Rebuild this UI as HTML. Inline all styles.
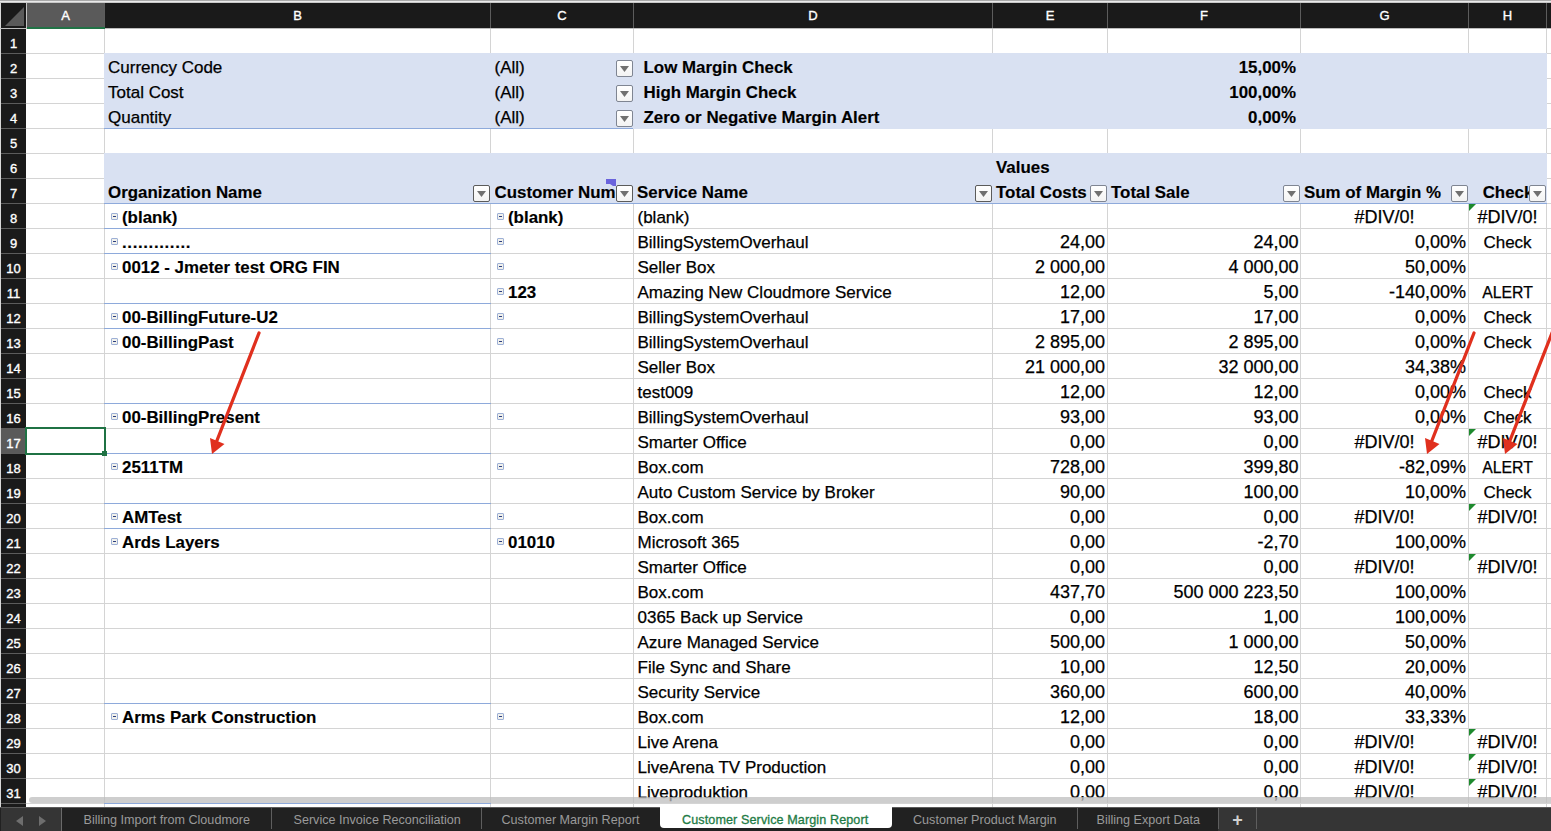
<!DOCTYPE html><html><head><meta charset="utf-8"><style>
html,body{margin:0;padding:0;}
body{width:1551px;height:831px;position:relative;overflow:hidden;background:#fff;font-family:"Liberation Sans",sans-serif;}
body div{position:absolute;}
.t,.n,.al{-webkit-text-stroke:0.25px #000;}
.b{-webkit-text-stroke:0.15px #000;}
.t{font-size:17px;line-height:20px;height:20px;white-space:nowrap;}
.b{font-size:16.9px;line-height:20px;height:20px;white-space:nowrap;font-weight:bold;}
.n{font-size:18px;line-height:20px;height:20px;white-space:nowrap;margin-top:-1px;}
.al{font-size:15.8px;line-height:20px;height:20px;white-space:nowrap;}
.hd{font-size:13px;line-height:20px;height:20px;color:#fff;-webkit-text-stroke:0.35px #fff;text-align:center;white-space:nowrap;}
.fb{width:15px;height:15px;border:1px solid #7f8592;border-radius:2px;background:linear-gradient(#fff,#f3f3f3);}
.fb2{width:15px;height:15px;border:1px solid #5b5b5b;border-radius:2px;background:linear-gradient(#fff,#f3f3f3);}
.ci{width:5px;height:5px;border:1px solid #9db0d6;border-radius:1px;background:#f1f1ec;}
.tab{font-size:12.6px;line-height:16px;color:#9a9a9a;white-space:nowrap;top:812px;}
</style></head><body>

<div style="left:0px;top:0px;width:1551px;height:1px;background:#a9a9a9;"></div>
<div style="left:0px;top:1px;width:1551px;height:1px;background:#e9e9e9;"></div>
<div style="left:0px;top:2px;width:1551px;height:1px;background:#c8c8c8;"></div>
<div style="left:0px;top:3px;width:1551px;height:25px;background:#1a1a1a;"></div>
<div style="left:0px;top:3px;width:1px;height:828px;background:#d8d8d8;"></div>
<svg style="position:absolute;left:0;top:0" width="30" height="30"><polygon points="24,7 24,26 5,26" fill="#5a5a5a"/></svg>
<div style="left:104px;top:3px;width:1px;height:25px;background:#5c5c5c;"></div>
<div style="left:490px;top:3px;width:1px;height:25px;background:#5c5c5c;"></div>
<div style="left:633px;top:3px;width:1px;height:25px;background:#5c5c5c;"></div>
<div style="left:992px;top:3px;width:1px;height:25px;background:#5c5c5c;"></div>
<div style="left:1107px;top:3px;width:1px;height:25px;background:#5c5c5c;"></div>
<div style="left:1300px;top:3px;width:1px;height:25px;background:#5c5c5c;"></div>
<div style="left:1468px;top:3px;width:1px;height:25px;background:#5c5c5c;"></div>
<div style="left:1546px;top:3px;width:1px;height:25px;background:#5c5c5c;"></div>
<div style="left:26px;top:3px;width:1px;height:26px;background:#c4c4c4;"></div>
<div style="left:0px;top:28px;width:1551px;height:1px;background:#bdbdbd;"></div>
<div style="left:27px;top:3px;width:77px;height:24px;background:#5a5a5a;"></div>
<div style="left:27px;top:27px;width:78px;height:2px;background:#217346;"></div>
<div class="hd" style="left:15.5px;width:100px;top:6px">A</div>
<div class="hd" style="left:247.5px;width:100px;top:6px">B</div>
<div class="hd" style="left:512.0px;width:100px;top:6px">C</div>
<div class="hd" style="left:763.0px;width:100px;top:6px">D</div>
<div class="hd" style="left:1000.0px;width:100px;top:6px">E</div>
<div class="hd" style="left:1154.0px;width:100px;top:6px">F</div>
<div class="hd" style="left:1334.5px;width:100px;top:6px">G</div>
<div class="hd" style="left:1457.5px;width:100px;top:6px">H</div>
<div class="hd" style="left:1527px;width:40px;top:6px"></div>
<div style="left:1px;top:29px;width:25px;height:778px;background:#1a1a1a;"></div>
<div style="left:1px;top:53px;width:25px;height:1px;background:#5c5c5c;"></div>
<div style="left:1px;top:78px;width:25px;height:1px;background:#5c5c5c;"></div>
<div style="left:1px;top:103px;width:25px;height:1px;background:#5c5c5c;"></div>
<div style="left:1px;top:128px;width:25px;height:1px;background:#5c5c5c;"></div>
<div style="left:1px;top:153px;width:25px;height:1px;background:#5c5c5c;"></div>
<div style="left:1px;top:178px;width:25px;height:1px;background:#5c5c5c;"></div>
<div style="left:1px;top:203px;width:25px;height:1px;background:#5c5c5c;"></div>
<div style="left:1px;top:228px;width:25px;height:1px;background:#5c5c5c;"></div>
<div style="left:1px;top:253px;width:25px;height:1px;background:#5c5c5c;"></div>
<div style="left:1px;top:278px;width:25px;height:1px;background:#5c5c5c;"></div>
<div style="left:1px;top:303px;width:25px;height:1px;background:#5c5c5c;"></div>
<div style="left:1px;top:328px;width:25px;height:1px;background:#5c5c5c;"></div>
<div style="left:1px;top:353px;width:25px;height:1px;background:#5c5c5c;"></div>
<div style="left:1px;top:378px;width:25px;height:1px;background:#5c5c5c;"></div>
<div style="left:1px;top:403px;width:25px;height:1px;background:#5c5c5c;"></div>
<div style="left:1px;top:428px;width:25px;height:1px;background:#5c5c5c;"></div>
<div style="left:1px;top:453px;width:25px;height:1px;background:#5c5c5c;"></div>
<div style="left:1px;top:478px;width:25px;height:1px;background:#5c5c5c;"></div>
<div style="left:1px;top:503px;width:25px;height:1px;background:#5c5c5c;"></div>
<div style="left:1px;top:528px;width:25px;height:1px;background:#5c5c5c;"></div>
<div style="left:1px;top:553px;width:25px;height:1px;background:#5c5c5c;"></div>
<div style="left:1px;top:578px;width:25px;height:1px;background:#5c5c5c;"></div>
<div style="left:1px;top:603px;width:25px;height:1px;background:#5c5c5c;"></div>
<div style="left:1px;top:628px;width:25px;height:1px;background:#5c5c5c;"></div>
<div style="left:1px;top:653px;width:25px;height:1px;background:#5c5c5c;"></div>
<div style="left:1px;top:678px;width:25px;height:1px;background:#5c5c5c;"></div>
<div style="left:1px;top:703px;width:25px;height:1px;background:#5c5c5c;"></div>
<div style="left:1px;top:728px;width:25px;height:1px;background:#5c5c5c;"></div>
<div style="left:1px;top:753px;width:25px;height:1px;background:#5c5c5c;"></div>
<div style="left:1px;top:778px;width:25px;height:1px;background:#5c5c5c;"></div>
<div style="left:1px;top:803px;width:25px;height:1px;background:#5c5c5c;"></div>
<div style="left:1px;top:429px;width:25px;height:24px;background:#5a5a5a;"></div>
<div class="hd" style="left:1px;width:25px;top:34px">1</div>
<div class="hd" style="left:1px;width:25px;top:59px">2</div>
<div class="hd" style="left:1px;width:25px;top:84px">3</div>
<div class="hd" style="left:1px;width:25px;top:109px">4</div>
<div class="hd" style="left:1px;width:25px;top:134px">5</div>
<div class="hd" style="left:1px;width:25px;top:159px">6</div>
<div class="hd" style="left:1px;width:25px;top:184px">7</div>
<div class="hd" style="left:1px;width:25px;top:209px">8</div>
<div class="hd" style="left:1px;width:25px;top:234px">9</div>
<div class="hd" style="left:1px;width:25px;top:259px">10</div>
<div class="hd" style="left:1px;width:25px;top:284px">11</div>
<div class="hd" style="left:1px;width:25px;top:309px">12</div>
<div class="hd" style="left:1px;width:25px;top:334px">13</div>
<div class="hd" style="left:1px;width:25px;top:359px">14</div>
<div class="hd" style="left:1px;width:25px;top:384px">15</div>
<div class="hd" style="left:1px;width:25px;top:409px">16</div>
<div class="hd" style="left:1px;width:25px;top:434px">17</div>
<div class="hd" style="left:1px;width:25px;top:459px">18</div>
<div class="hd" style="left:1px;width:25px;top:484px">19</div>
<div class="hd" style="left:1px;width:25px;top:509px">20</div>
<div class="hd" style="left:1px;width:25px;top:534px">21</div>
<div class="hd" style="left:1px;width:25px;top:559px">22</div>
<div class="hd" style="left:1px;width:25px;top:584px">23</div>
<div class="hd" style="left:1px;width:25px;top:609px">24</div>
<div class="hd" style="left:1px;width:25px;top:634px">25</div>
<div class="hd" style="left:1px;width:25px;top:659px">26</div>
<div class="hd" style="left:1px;width:25px;top:684px">27</div>
<div class="hd" style="left:1px;width:25px;top:709px">28</div>
<div class="hd" style="left:1px;width:25px;top:734px">29</div>
<div class="hd" style="left:1px;width:25px;top:759px">30</div>
<div class="hd" style="left:1px;width:25px;top:784px">31</div>
<div style="left:26px;top:53px;width:1525px;height:1px;background:#d4d4d4;"></div>
<div style="left:26px;top:78px;width:1525px;height:1px;background:#d4d4d4;"></div>
<div style="left:26px;top:103px;width:1525px;height:1px;background:#d4d4d4;"></div>
<div style="left:26px;top:128px;width:1525px;height:1px;background:#d4d4d4;"></div>
<div style="left:26px;top:153px;width:1525px;height:1px;background:#d4d4d4;"></div>
<div style="left:26px;top:178px;width:1525px;height:1px;background:#d4d4d4;"></div>
<div style="left:26px;top:203px;width:1525px;height:1px;background:#d4d4d4;"></div>
<div style="left:26px;top:228px;width:1525px;height:1px;background:#d4d4d4;"></div>
<div style="left:26px;top:253px;width:1525px;height:1px;background:#d4d4d4;"></div>
<div style="left:26px;top:278px;width:1525px;height:1px;background:#d4d4d4;"></div>
<div style="left:26px;top:303px;width:1525px;height:1px;background:#d4d4d4;"></div>
<div style="left:26px;top:328px;width:1525px;height:1px;background:#d4d4d4;"></div>
<div style="left:26px;top:353px;width:1525px;height:1px;background:#d4d4d4;"></div>
<div style="left:26px;top:378px;width:1525px;height:1px;background:#d4d4d4;"></div>
<div style="left:26px;top:403px;width:1525px;height:1px;background:#d4d4d4;"></div>
<div style="left:26px;top:428px;width:1525px;height:1px;background:#d4d4d4;"></div>
<div style="left:26px;top:453px;width:1525px;height:1px;background:#d4d4d4;"></div>
<div style="left:26px;top:478px;width:1525px;height:1px;background:#d4d4d4;"></div>
<div style="left:26px;top:503px;width:1525px;height:1px;background:#d4d4d4;"></div>
<div style="left:26px;top:528px;width:1525px;height:1px;background:#d4d4d4;"></div>
<div style="left:26px;top:553px;width:1525px;height:1px;background:#d4d4d4;"></div>
<div style="left:26px;top:578px;width:1525px;height:1px;background:#d4d4d4;"></div>
<div style="left:26px;top:603px;width:1525px;height:1px;background:#d4d4d4;"></div>
<div style="left:26px;top:628px;width:1525px;height:1px;background:#d4d4d4;"></div>
<div style="left:26px;top:653px;width:1525px;height:1px;background:#d4d4d4;"></div>
<div style="left:26px;top:678px;width:1525px;height:1px;background:#d4d4d4;"></div>
<div style="left:26px;top:703px;width:1525px;height:1px;background:#d4d4d4;"></div>
<div style="left:26px;top:728px;width:1525px;height:1px;background:#d4d4d4;"></div>
<div style="left:26px;top:753px;width:1525px;height:1px;background:#d4d4d4;"></div>
<div style="left:26px;top:778px;width:1525px;height:1px;background:#d4d4d4;"></div>
<div style="left:26px;top:803px;width:1525px;height:1px;background:#d4d4d4;"></div>
<div style="left:104px;top:29px;width:1px;height:778px;background:#d4d4d4;"></div>
<div style="left:490px;top:29px;width:1px;height:778px;background:#d4d4d4;"></div>
<div style="left:633px;top:29px;width:1px;height:778px;background:#d4d4d4;"></div>
<div style="left:992px;top:29px;width:1px;height:778px;background:#d4d4d4;"></div>
<div style="left:1107px;top:29px;width:1px;height:778px;background:#d4d4d4;"></div>
<div style="left:1300px;top:29px;width:1px;height:778px;background:#d4d4d4;"></div>
<div style="left:1468px;top:29px;width:1px;height:778px;background:#d4d4d4;"></div>
<div style="left:1546px;top:29px;width:1px;height:778px;background:#d4d4d4;"></div>
<div style="left:104px;top:53px;width:1443px;height:76px;background:#d9e1f2;"></div>
<div style="left:104px;top:128px;width:529px;height:1px;background:#8eaadb;"></div>
<div style="left:104px;top:153px;width:1443px;height:50px;background:#d9e1f2;"></div>
<div style="left:104px;top:203px;width:1443px;height:1px;background:#8eaadb;"></div>
<div style="left:104px;top:228px;width:387px;height:1px;background:#8eaadb;"></div>
<div style="left:104px;top:253px;width:387px;height:1px;background:#8eaadb;"></div>
<div style="left:104px;top:303px;width:387px;height:1px;background:#8eaadb;"></div>
<div style="left:104px;top:328px;width:387px;height:1px;background:#8eaadb;"></div>
<div style="left:104px;top:403px;width:387px;height:1px;background:#8eaadb;"></div>
<div style="left:104px;top:453px;width:387px;height:1px;background:#8eaadb;"></div>
<div style="left:104px;top:503px;width:387px;height:1px;background:#8eaadb;"></div>
<div style="left:104px;top:528px;width:387px;height:1px;background:#8eaadb;"></div>
<div style="left:104px;top:703px;width:387px;height:1px;background:#8eaadb;"></div>
<div style="left:104px;top:803px;width:387px;height:1px;background:#8eaadb;"></div>
<div class="t" style="left:108px;top:58px;color:#000">Currency Code</div>
<div class="t" style="left:108px;top:83px;color:#000">Total Cost</div>
<div class="t" style="left:108px;top:108px;color:#000">Quantity</div>
<div class="t" style="left:494.5px;top:58px;color:#000">(All)</div>
<div class="fb" style="left:616px;top:60px"></div>
<svg style="position:absolute;left:620px;top:66px" width="10" height="7"><polygon points="0,0 9,0 4.5,6" fill="#707070"/></svg>
<div class="t" style="left:494.5px;top:83px;color:#000">(All)</div>
<div class="fb" style="left:616px;top:85px"></div>
<svg style="position:absolute;left:620px;top:91px" width="10" height="7"><polygon points="0,0 9,0 4.5,6" fill="#707070"/></svg>
<div class="t" style="left:494.5px;top:108px;color:#000">(All)</div>
<div class="fb" style="left:616px;top:110px"></div>
<svg style="position:absolute;left:620px;top:116px" width="10" height="7"><polygon points="0,0 9,0 4.5,6" fill="#707070"/></svg>
<div class="b" style="left:643.5px;top:58px;color:#000">Low Margin Check</div>
<div class="b" style="left:643.5px;top:83px;color:#000">High Margin Check</div>
<div class="b" style="left:643.5px;top:108px;color:#000">Zero or Negative Margin Alert</div>
<div class="b" style="left:896px;width:400px;text-align:right;top:58px;color:#000">15,00%</div>
<div class="b" style="left:896px;width:400px;text-align:right;top:83px;color:#000">100,00%</div>
<div class="b" style="left:896px;width:400px;text-align:right;top:108px;color:#000">0,00%</div>
<div class="b" style="left:996px;top:158px;color:#000">Values</div>
<div class="b" style="left:108px;top:183px;color:#000">Organization Name</div>
<div class="b" style="left:494.5px;width:121.5px;overflow:hidden;top:183px;color:#000">Customer Number</div>
<div class="b" style="left:637px;top:183px;color:#000">Service Name</div>
<div class="b" style="left:996px;top:183px;color:#000">Total Costs</div>
<div class="b" style="left:1111px;top:183px;color:#000">Total Sale</div>
<div class="b" style="left:1304px;top:183px;color:#000">Sum of Margin %</div>
<div class="b" style="left:1308px;width:400px;text-align:center;top:183px;color:#000">Check</div>
<div class="fb2" style="left:473px;top:185px"></div>
<svg style="position:absolute;left:477px;top:191px" width="10" height="7"><polygon points="0,0 9,0 4.5,6" fill="#707070"/></svg>
<div class="fb2" style="left:616px;top:185px"></div>
<svg style="position:absolute;left:620px;top:191px" width="10" height="7"><polygon points="0,0 9,0 4.5,6" fill="#707070"/></svg>
<div class="fb2" style="left:975px;top:185px"></div>
<svg style="position:absolute;left:979px;top:191px" width="10" height="7"><polygon points="0,0 9,0 4.5,6" fill="#707070"/></svg>
<div class="fb" style="left:1090px;top:185px"></div>
<svg style="position:absolute;left:1094px;top:191px" width="10" height="7"><polygon points="0,0 9,0 4.5,6" fill="#707070"/></svg>
<div class="fb" style="left:1283px;top:185px"></div>
<svg style="position:absolute;left:1287px;top:191px" width="10" height="7"><polygon points="0,0 9,0 4.5,6" fill="#707070"/></svg>
<div class="fb" style="left:1451px;top:185px"></div>
<svg style="position:absolute;left:1455px;top:191px" width="10" height="7"><polygon points="0,0 9,0 4.5,6" fill="#707070"/></svg>
<div class="fb" style="left:1529px;top:185px"></div>
<svg style="position:absolute;left:1533px;top:191px" width="10" height="7"><polygon points="0,0 9,0 4.5,6" fill="#707070"/></svg>
<svg style="position:absolute;left:600px;top:175px" width="20" height="15"><polygon points="6,4 16,4 16,11 13,11 10,9 6,9" fill="#6a63dc"/></svg>
<div class="ci" style="left:111px;top:213px"><div style="left:1px;top:2px;width:3px;height:1px;background:#2c3e7e"></div></div>
<div class="b" style="left:122px;top:208px;color:#000">(blank)</div>
<div class="ci" style="left:497px;top:213px"><div style="left:1px;top:2px;width:3px;height:1px;background:#2c3e7e"></div></div>
<div class="b" style="left:508px;top:208px;color:#000">(blank)</div>
<div class="t" style="left:637.5px;top:208px;color:#000">(blank)</div>
<div class="n" style="left:1184.5px;width:400px;text-align:center;top:208px;color:#000">#DIV/0!</div>
<div class="n" style="left:1307.5px;width:400px;text-align:center;top:208px;color:#000">#DIV/0!</div>
<svg style="position:absolute;left:1469px;top:204px" width="8" height="8"><polygon points="0,0 7,0 0,7" fill="#1e8a2e"/></svg>
<div class="ci" style="left:111px;top:238px"><div style="left:1px;top:2px;width:3px;height:1px;background:#2c3e7e"></div></div>
<div class="b" style="left:122px;top:233px;color:#000"><span style="letter-spacing:0.62px">.............</span></div>
<div class="ci" style="left:497px;top:238px"><div style="left:1px;top:2px;width:3px;height:1px;background:#2c3e7e"></div></div>
<div class="t" style="left:637.5px;top:233px;color:#000">BillingSystemOverhaul</div>
<div class="n" style="left:705px;width:400px;text-align:right;top:233px;color:#000">24,00</div>
<div class="n" style="left:898.5px;width:400px;text-align:right;top:233px;color:#000">24,00</div>
<div class="n" style="left:1066px;width:400px;text-align:right;top:233px;color:#000">0,00%</div>
<div class="t" style="left:1307.5px;width:400px;text-align:center;top:233px;color:#000">Check</div>
<div class="ci" style="left:111px;top:263px"><div style="left:1px;top:2px;width:3px;height:1px;background:#2c3e7e"></div></div>
<div class="b" style="left:122px;top:258px;color:#000">0012 - Jmeter test ORG FIN</div>
<div class="ci" style="left:497px;top:263px"><div style="left:1px;top:2px;width:3px;height:1px;background:#2c3e7e"></div></div>
<div class="t" style="left:637.5px;top:258px;color:#000">Seller Box</div>
<div class="n" style="left:705px;width:400px;text-align:right;top:258px;color:#000">2 000,00</div>
<div class="n" style="left:898.5px;width:400px;text-align:right;top:258px;color:#000">4 000,00</div>
<div class="n" style="left:1066px;width:400px;text-align:right;top:258px;color:#000">50,00%</div>
<div class="ci" style="left:497px;top:288px"><div style="left:1px;top:2px;width:3px;height:1px;background:#2c3e7e"></div></div>
<div class="b" style="left:508px;top:283px;color:#000">123</div>
<div class="t" style="left:637.5px;top:283px;color:#000">Amazing New Cloudmore Service</div>
<div class="n" style="left:705px;width:400px;text-align:right;top:283px;color:#000">12,00</div>
<div class="n" style="left:898.5px;width:400px;text-align:right;top:283px;color:#000">5,00</div>
<div class="n" style="left:1066px;width:400px;text-align:right;top:283px;color:#000">-140,00%</div>
<div class="al" style="left:1307.5px;width:400px;text-align:center;top:283px;color:#000">ALERT</div>
<div class="ci" style="left:111px;top:313px"><div style="left:1px;top:2px;width:3px;height:1px;background:#2c3e7e"></div></div>
<div class="b" style="left:122px;top:308px;color:#000">00-BillingFuture-U2</div>
<div class="ci" style="left:497px;top:313px"><div style="left:1px;top:2px;width:3px;height:1px;background:#2c3e7e"></div></div>
<div class="t" style="left:637.5px;top:308px;color:#000">BillingSystemOverhaul</div>
<div class="n" style="left:705px;width:400px;text-align:right;top:308px;color:#000">17,00</div>
<div class="n" style="left:898.5px;width:400px;text-align:right;top:308px;color:#000">17,00</div>
<div class="n" style="left:1066px;width:400px;text-align:right;top:308px;color:#000">0,00%</div>
<div class="t" style="left:1307.5px;width:400px;text-align:center;top:308px;color:#000">Check</div>
<div class="ci" style="left:111px;top:338px"><div style="left:1px;top:2px;width:3px;height:1px;background:#2c3e7e"></div></div>
<div class="b" style="left:122px;top:333px;color:#000">00-BillingPast</div>
<div class="ci" style="left:497px;top:338px"><div style="left:1px;top:2px;width:3px;height:1px;background:#2c3e7e"></div></div>
<div class="t" style="left:637.5px;top:333px;color:#000">BillingSystemOverhaul</div>
<div class="n" style="left:705px;width:400px;text-align:right;top:333px;color:#000">2 895,00</div>
<div class="n" style="left:898.5px;width:400px;text-align:right;top:333px;color:#000">2 895,00</div>
<div class="n" style="left:1066px;width:400px;text-align:right;top:333px;color:#000">0,00%</div>
<div class="t" style="left:1307.5px;width:400px;text-align:center;top:333px;color:#000">Check</div>
<div class="t" style="left:637.5px;top:358px;color:#000">Seller Box</div>
<div class="n" style="left:705px;width:400px;text-align:right;top:358px;color:#000">21 000,00</div>
<div class="n" style="left:898.5px;width:400px;text-align:right;top:358px;color:#000">32 000,00</div>
<div class="n" style="left:1066px;width:400px;text-align:right;top:358px;color:#000">34,38%</div>
<div class="t" style="left:637.5px;top:383px;color:#000">test009</div>
<div class="n" style="left:705px;width:400px;text-align:right;top:383px;color:#000">12,00</div>
<div class="n" style="left:898.5px;width:400px;text-align:right;top:383px;color:#000">12,00</div>
<div class="n" style="left:1066px;width:400px;text-align:right;top:383px;color:#000">0,00%</div>
<div class="t" style="left:1307.5px;width:400px;text-align:center;top:383px;color:#000">Check</div>
<div class="ci" style="left:111px;top:413px"><div style="left:1px;top:2px;width:3px;height:1px;background:#2c3e7e"></div></div>
<div class="b" style="left:122px;top:408px;color:#000">00-BillingPresent</div>
<div class="ci" style="left:497px;top:413px"><div style="left:1px;top:2px;width:3px;height:1px;background:#2c3e7e"></div></div>
<div class="t" style="left:637.5px;top:408px;color:#000">BillingSystemOverhaul</div>
<div class="n" style="left:705px;width:400px;text-align:right;top:408px;color:#000">93,00</div>
<div class="n" style="left:898.5px;width:400px;text-align:right;top:408px;color:#000">93,00</div>
<div class="n" style="left:1066px;width:400px;text-align:right;top:408px;color:#000">0,00%</div>
<div class="t" style="left:1307.5px;width:400px;text-align:center;top:408px;color:#000">Check</div>
<div class="t" style="left:637.5px;top:433px;color:#000">Smarter Office</div>
<div class="n" style="left:705px;width:400px;text-align:right;top:433px;color:#000">0,00</div>
<div class="n" style="left:898.5px;width:400px;text-align:right;top:433px;color:#000">0,00</div>
<div class="n" style="left:1184.5px;width:400px;text-align:center;top:433px;color:#000">#DIV/0!</div>
<div class="n" style="left:1307.5px;width:400px;text-align:center;top:433px;color:#000">#DIV/0!</div>
<svg style="position:absolute;left:1469px;top:429px" width="8" height="8"><polygon points="0,0 7,0 0,7" fill="#1e8a2e"/></svg>
<div class="ci" style="left:111px;top:463px"><div style="left:1px;top:2px;width:3px;height:1px;background:#2c3e7e"></div></div>
<div class="b" style="left:122px;top:458px;color:#000">2511TM</div>
<div class="ci" style="left:497px;top:463px"><div style="left:1px;top:2px;width:3px;height:1px;background:#2c3e7e"></div></div>
<div class="t" style="left:637.5px;top:458px;color:#000">Box.com</div>
<div class="n" style="left:705px;width:400px;text-align:right;top:458px;color:#000">728,00</div>
<div class="n" style="left:898.5px;width:400px;text-align:right;top:458px;color:#000">399,80</div>
<div class="n" style="left:1066px;width:400px;text-align:right;top:458px;color:#000">-82,09%</div>
<div class="al" style="left:1307.5px;width:400px;text-align:center;top:458px;color:#000">ALERT</div>
<div class="t" style="left:637.5px;top:483px;color:#000">Auto Custom Service by Broker</div>
<div class="n" style="left:705px;width:400px;text-align:right;top:483px;color:#000">90,00</div>
<div class="n" style="left:898.5px;width:400px;text-align:right;top:483px;color:#000">100,00</div>
<div class="n" style="left:1066px;width:400px;text-align:right;top:483px;color:#000">10,00%</div>
<div class="t" style="left:1307.5px;width:400px;text-align:center;top:483px;color:#000">Check</div>
<div class="ci" style="left:111px;top:513px"><div style="left:1px;top:2px;width:3px;height:1px;background:#2c3e7e"></div></div>
<div class="b" style="left:122px;top:508px;color:#000">AMTest</div>
<div class="ci" style="left:497px;top:513px"><div style="left:1px;top:2px;width:3px;height:1px;background:#2c3e7e"></div></div>
<div class="t" style="left:637.5px;top:508px;color:#000">Box.com</div>
<div class="n" style="left:705px;width:400px;text-align:right;top:508px;color:#000">0,00</div>
<div class="n" style="left:898.5px;width:400px;text-align:right;top:508px;color:#000">0,00</div>
<div class="n" style="left:1184.5px;width:400px;text-align:center;top:508px;color:#000">#DIV/0!</div>
<div class="n" style="left:1307.5px;width:400px;text-align:center;top:508px;color:#000">#DIV/0!</div>
<svg style="position:absolute;left:1469px;top:504px" width="8" height="8"><polygon points="0,0 7,0 0,7" fill="#1e8a2e"/></svg>
<div class="ci" style="left:111px;top:538px"><div style="left:1px;top:2px;width:3px;height:1px;background:#2c3e7e"></div></div>
<div class="b" style="left:122px;top:533px;color:#000">Ards Layers</div>
<div class="ci" style="left:497px;top:538px"><div style="left:1px;top:2px;width:3px;height:1px;background:#2c3e7e"></div></div>
<div class="b" style="left:508px;top:533px;color:#000">01010</div>
<div class="t" style="left:637.5px;top:533px;color:#000">Microsoft 365</div>
<div class="n" style="left:705px;width:400px;text-align:right;top:533px;color:#000">0,00</div>
<div class="n" style="left:898.5px;width:400px;text-align:right;top:533px;color:#000">-2,70</div>
<div class="n" style="left:1066px;width:400px;text-align:right;top:533px;color:#000">100,00%</div>
<div class="t" style="left:637.5px;top:558px;color:#000">Smarter Office</div>
<div class="n" style="left:705px;width:400px;text-align:right;top:558px;color:#000">0,00</div>
<div class="n" style="left:898.5px;width:400px;text-align:right;top:558px;color:#000">0,00</div>
<div class="n" style="left:1184.5px;width:400px;text-align:center;top:558px;color:#000">#DIV/0!</div>
<div class="n" style="left:1307.5px;width:400px;text-align:center;top:558px;color:#000">#DIV/0!</div>
<svg style="position:absolute;left:1469px;top:554px" width="8" height="8"><polygon points="0,0 7,0 0,7" fill="#1e8a2e"/></svg>
<div class="t" style="left:637.5px;top:583px;color:#000">Box.com</div>
<div class="n" style="left:705px;width:400px;text-align:right;top:583px;color:#000">437,70</div>
<div class="n" style="left:898.5px;width:400px;text-align:right;top:583px;color:#000">500 000 223,50</div>
<div class="n" style="left:1066px;width:400px;text-align:right;top:583px;color:#000">100,00%</div>
<div class="t" style="left:637.5px;top:608px;color:#000">0365 Back up Service</div>
<div class="n" style="left:705px;width:400px;text-align:right;top:608px;color:#000">0,00</div>
<div class="n" style="left:898.5px;width:400px;text-align:right;top:608px;color:#000">1,00</div>
<div class="n" style="left:1066px;width:400px;text-align:right;top:608px;color:#000">100,00%</div>
<div class="t" style="left:637.5px;top:633px;color:#000">Azure Managed Service</div>
<div class="n" style="left:705px;width:400px;text-align:right;top:633px;color:#000">500,00</div>
<div class="n" style="left:898.5px;width:400px;text-align:right;top:633px;color:#000">1 000,00</div>
<div class="n" style="left:1066px;width:400px;text-align:right;top:633px;color:#000">50,00%</div>
<div class="t" style="left:637.5px;top:658px;color:#000">File Sync and Share</div>
<div class="n" style="left:705px;width:400px;text-align:right;top:658px;color:#000">10,00</div>
<div class="n" style="left:898.5px;width:400px;text-align:right;top:658px;color:#000">12,50</div>
<div class="n" style="left:1066px;width:400px;text-align:right;top:658px;color:#000">20,00%</div>
<div class="t" style="left:637.5px;top:683px;color:#000">Security Service</div>
<div class="n" style="left:705px;width:400px;text-align:right;top:683px;color:#000">360,00</div>
<div class="n" style="left:898.5px;width:400px;text-align:right;top:683px;color:#000">600,00</div>
<div class="n" style="left:1066px;width:400px;text-align:right;top:683px;color:#000">40,00%</div>
<div class="ci" style="left:111px;top:713px"><div style="left:1px;top:2px;width:3px;height:1px;background:#2c3e7e"></div></div>
<div class="b" style="left:122px;top:708px;color:#000">Arms Park Construction</div>
<div class="ci" style="left:497px;top:713px"><div style="left:1px;top:2px;width:3px;height:1px;background:#2c3e7e"></div></div>
<div class="t" style="left:637.5px;top:708px;color:#000">Box.com</div>
<div class="n" style="left:705px;width:400px;text-align:right;top:708px;color:#000">12,00</div>
<div class="n" style="left:898.5px;width:400px;text-align:right;top:708px;color:#000">18,00</div>
<div class="n" style="left:1066px;width:400px;text-align:right;top:708px;color:#000">33,33%</div>
<div class="t" style="left:637.5px;top:733px;color:#000">Live Arena</div>
<div class="n" style="left:705px;width:400px;text-align:right;top:733px;color:#000">0,00</div>
<div class="n" style="left:898.5px;width:400px;text-align:right;top:733px;color:#000">0,00</div>
<div class="n" style="left:1184.5px;width:400px;text-align:center;top:733px;color:#000">#DIV/0!</div>
<div class="n" style="left:1307.5px;width:400px;text-align:center;top:733px;color:#000">#DIV/0!</div>
<svg style="position:absolute;left:1469px;top:729px" width="8" height="8"><polygon points="0,0 7,0 0,7" fill="#1e8a2e"/></svg>
<div class="t" style="left:637.5px;top:758px;color:#000">LiveArena TV Production</div>
<div class="n" style="left:705px;width:400px;text-align:right;top:758px;color:#000">0,00</div>
<div class="n" style="left:898.5px;width:400px;text-align:right;top:758px;color:#000">0,00</div>
<div class="n" style="left:1184.5px;width:400px;text-align:center;top:758px;color:#000">#DIV/0!</div>
<div class="n" style="left:1307.5px;width:400px;text-align:center;top:758px;color:#000">#DIV/0!</div>
<svg style="position:absolute;left:1469px;top:754px" width="8" height="8"><polygon points="0,0 7,0 0,7" fill="#1e8a2e"/></svg>
<div class="t" style="left:637.5px;top:783px;color:#000">Liveproduktion</div>
<div class="n" style="left:705px;width:400px;text-align:right;top:783px;color:#000">0,00</div>
<div class="n" style="left:898.5px;width:400px;text-align:right;top:783px;color:#000">0,00</div>
<div class="n" style="left:1184.5px;width:400px;text-align:center;top:783px;color:#000">#DIV/0!</div>
<div class="n" style="left:1307.5px;width:400px;text-align:center;top:783px;color:#000">#DIV/0!</div>
<svg style="position:absolute;left:1469px;top:779px" width="8" height="8"><polygon points="0,0 7,0 0,7" fill="#1e8a2e"/></svg>
<div style="left:25px;top:427px;width:77px;height:24px;border:2px solid #1f7244;"></div>
<div style="left:102px;top:451px;width:5px;height:5px;background:#1f7244;"></div>
<div style="left:29px;top:797px;width:1530px;height:6px;background:rgba(190,190,190,0.75);border-radius:3px;"></div>
<svg style="position:absolute;left:0;top:0" width="1551" height="831">
<g stroke="#e0301e" stroke-width="3.3" fill="#e0301e" stroke-linecap="round">
<line x1="259" y1="333" x2="216" y2="443"/>
<polygon stroke="none" points="212,454 210,438 224.5,444"/>
<line x1="1474" y1="333" x2="1431" y2="443"/>
<polygon stroke="none" points="1427,454 1425,438 1439.5,444"/>
<line x1="1552" y1="333" x2="1509" y2="443"/>
<polygon stroke="none" points="1505,454 1503,438 1517.5,444"/>
</g></svg>
<div style="left:0px;top:807px;width:1551px;height:1px;background:#5a5a5a;"></div>
<div style="left:0px;top:808px;width:1551px;height:23px;background:#212121;"></div>
<div style="left:1px;top:808px;width:60px;height:23px;background:#353535;"></div>
<div style="left:61px;top:808px;width:1px;height:23px;background:#6a6a6a;"></div>
<svg style="position:absolute;left:0;top:808px" width="60" height="23"><polygon points="23,8 23,18 16,13" fill="#6e6e6e"/><polygon points="39,8 39,18 46,13" fill="#6e6e6e"/></svg>
<div style="left:1218px;top:808px;width:333px;height:23px;background:#353535;"></div>
<div style="left:271px;top:808px;width:1px;height:21px;background:#5e5e5e;"></div>
<div style="left:481px;top:808px;width:1px;height:21px;background:#5e5e5e;"></div>
<div style="left:1077px;top:808px;width:1px;height:21px;background:#5e5e5e;"></div>
<div style="left:1218px;top:808px;width:1px;height:21px;background:#5e5e5e;"></div>
<div style="left:1256px;top:808px;width:1px;height:21px;background:#5e5e5e;"></div>
<div style="left:660px;top:807px;width:232px;height:21px;background:#ffffff;border-radius:0 0 4px 4px;"></div>
<div class="tab" style="left:83.5px">Billing Import from Cloudmore</div>
<div class="tab" style="left:293.5px">Service Invoice Reconciliation</div>
<div class="tab" style="left:501.5px">Customer Margin Report</div>
<div class="tab" style="left:682px;color:#1e7b45;-webkit-text-stroke:0.3px #1e7b45;letter-spacing:0.1px">Customer Service Margin Report</div>
<div class="tab" style="left:913px">Customer Product Margin</div>
<div class="tab" style="left:1096.5px">Billing Export Data</div>
<div style="left:1231px;top:812px;width:13px;height:16px;font-size:18px;line-height:16px;color:#d0d0d0;text-align:center;font-weight:bold">+</div>
</body></html>
